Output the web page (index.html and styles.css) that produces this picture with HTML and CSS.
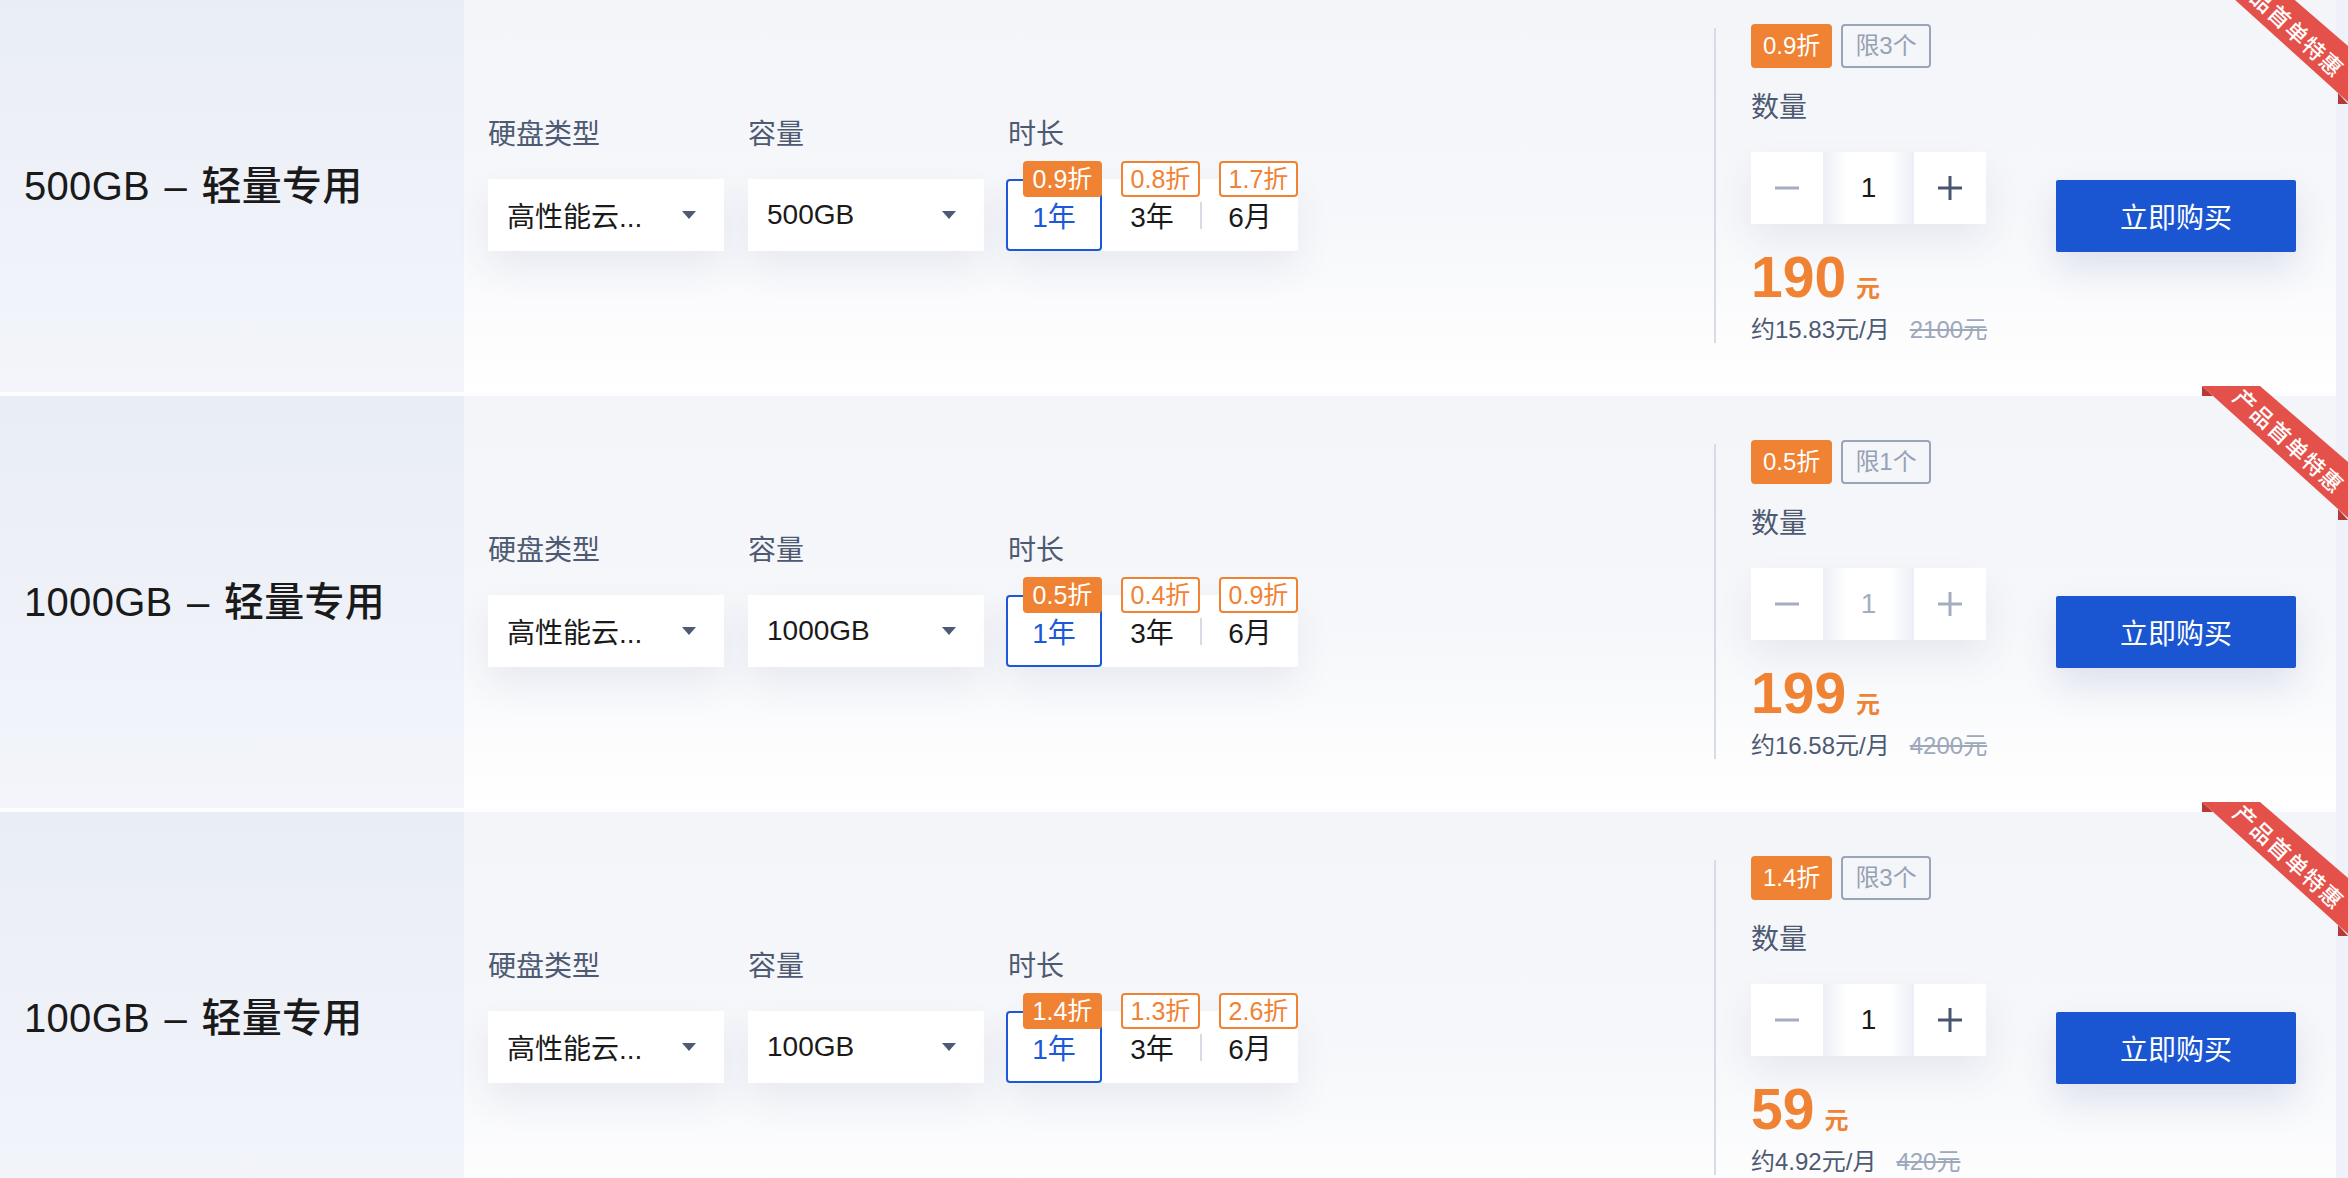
FILE: index.html
```html
<!DOCTYPE html>
<html lang="zh-CN">
<head>
<meta charset="utf-8">
<title>云硬盘特惠</title>
<link rel="stylesheet" href="styles.css">
</head>
<body>
<div class="page">
  <div class="list">

    <section class="row">
      <div class="name">500GB – 轻量专用</div>
      <div class="config">
        <div class="field">
          <div class="field-label">硬盘类型</div>
          <div class="select"><span>高性能云...</span><svg class="caret" viewBox="0 0 14 8"><path d="M0 0h14L7 8z"/></svg></div>
        </div>
        <div class="field">
          <div class="field-label">容量</div>
          <div class="select"><span>500GB</span><svg class="caret" viewBox="0 0 14 8"><path d="M0 0h14L7 8z"/></svg></div>
        </div>
        <div class="field">
          <div class="field-label">时长</div>
          <div class="seg">
            <div class="seg-item is-active"><span class="seg-tag is-filled">0.9折</span>1年</div>
            <div class="seg-sep is-hidden"></div>
            <div class="seg-item"><span class="seg-tag">0.8折</span>3年</div>
            <div class="seg-sep"></div>
            <div class="seg-item"><span class="seg-tag">1.7折</span>6月</div>
          </div>
        </div>
      </div>
      <div class="buy">
        <div class="vline"></div>
        <div class="order">
          <div class="badges"><span class="badge badge-off">0.9折</span><span class="badge badge-limit">限3个</span></div>
          <div class="field-label qty-label">数量</div>
          <div class="stepper">
            <div class="step"><svg viewBox="0 0 24 24" class="step-icon minus"><path d="M0 12h24"/></svg></div>
            <div class="step-num">1</div>
            <div class="step"><svg viewBox="0 0 24 24" class="step-icon plus"><path d="M0 12h24M12 0v24"/></svg></div>
          </div>
          <div class="price"><span class="price-num">190</span><span class="price-unit">元</span></div>
          <div class="price-sub"><span>约15.83元/月</span><span class="price-orig">2100元</span></div>
        </div>
        <button class="buy-btn" type="button">立即购买</button>
      </div>
      <svg class="ribbon" viewBox="0 0 152 152">
        <polygon class="ribbon-fold" points="6,0 6,10 17,10"/>
        <polygon class="ribbon-fold" points="142,123 142,134 152,134"/>
        <polygon class="ribbon-band" points="6,0 64,0 152,76 152,132"/>
        <text x="94" y="54" transform="rotate(43 94 54)" class="ribbon-text">产品首单特惠</text>
      </svg>
    </section>

    <section class="row">
      <div class="name">1000GB – 轻量专用</div>
      <div class="config">
        <div class="field">
          <div class="field-label">硬盘类型</div>
          <div class="select"><span>高性能云...</span><svg class="caret" viewBox="0 0 14 8"><path d="M0 0h14L7 8z"/></svg></div>
        </div>
        <div class="field">
          <div class="field-label">容量</div>
          <div class="select"><span>1000GB</span><svg class="caret" viewBox="0 0 14 8"><path d="M0 0h14L7 8z"/></svg></div>
        </div>
        <div class="field">
          <div class="field-label">时长</div>
          <div class="seg">
            <div class="seg-item is-active"><span class="seg-tag is-filled">0.5折</span>1年</div>
            <div class="seg-sep is-hidden"></div>
            <div class="seg-item"><span class="seg-tag">0.4折</span>3年</div>
            <div class="seg-sep"></div>
            <div class="seg-item"><span class="seg-tag">0.9折</span>6月</div>
          </div>
        </div>
      </div>
      <div class="buy">
        <div class="vline"></div>
        <div class="order">
          <div class="badges"><span class="badge badge-off">0.5折</span><span class="badge badge-limit">限1个</span></div>
          <div class="field-label qty-label">数量</div>
          <div class="stepper is-disabled">
            <div class="step"><svg viewBox="0 0 24 24" class="step-icon minus"><path d="M0 12h24"/></svg></div>
            <div class="step-num">1</div>
            <div class="step"><svg viewBox="0 0 24 24" class="step-icon plus"><path d="M0 12h24M12 0v24"/></svg></div>
          </div>
          <div class="price"><span class="price-num">199</span><span class="price-unit">元</span></div>
          <div class="price-sub"><span>约16.58元/月</span><span class="price-orig">4200元</span></div>
        </div>
        <button class="buy-btn" type="button">立即购买</button>
      </div>
      <svg class="ribbon" viewBox="0 0 152 152">
        <polygon class="ribbon-fold" points="6,0 6,10 17,10"/>
        <polygon class="ribbon-fold" points="142,123 142,134 152,134"/>
        <polygon class="ribbon-band" points="6,0 64,0 152,76 152,132"/>
        <text x="94" y="54" transform="rotate(43 94 54)" class="ribbon-text">产品首单特惠</text>
      </svg>
    </section>

    <section class="row">
      <div class="name">100GB – 轻量专用</div>
      <div class="config">
        <div class="field">
          <div class="field-label">硬盘类型</div>
          <div class="select"><span>高性能云...</span><svg class="caret" viewBox="0 0 14 8"><path d="M0 0h14L7 8z"/></svg></div>
        </div>
        <div class="field">
          <div class="field-label">容量</div>
          <div class="select"><span>100GB</span><svg class="caret" viewBox="0 0 14 8"><path d="M0 0h14L7 8z"/></svg></div>
        </div>
        <div class="field">
          <div class="field-label">时长</div>
          <div class="seg">
            <div class="seg-item is-active"><span class="seg-tag is-filled">1.4折</span>1年</div>
            <div class="seg-sep is-hidden"></div>
            <div class="seg-item"><span class="seg-tag">1.3折</span>3年</div>
            <div class="seg-sep"></div>
            <div class="seg-item"><span class="seg-tag">2.6折</span>6月</div>
          </div>
        </div>
      </div>
      <div class="buy">
        <div class="vline"></div>
        <div class="order">
          <div class="badges"><span class="badge badge-off">1.4折</span><span class="badge badge-limit">限3个</span></div>
          <div class="field-label qty-label">数量</div>
          <div class="stepper">
            <div class="step"><svg viewBox="0 0 24 24" class="step-icon minus"><path d="M0 12h24"/></svg></div>
            <div class="step-num">1</div>
            <div class="step"><svg viewBox="0 0 24 24" class="step-icon plus"><path d="M0 12h24M12 0v24"/></svg></div>
          </div>
          <div class="price"><span class="price-num">59</span><span class="price-unit">元</span></div>
          <div class="price-sub"><span>约4.92元/月</span><span class="price-orig">420元</span></div>
        </div>
        <button class="buy-btn" type="button">立即购买</button>
      </div>
      <svg class="ribbon" viewBox="0 0 152 152">
        <polygon class="ribbon-fold" points="6,0 6,10 17,10"/>
        <polygon class="ribbon-fold" points="142,123 142,134 152,134"/>
        <polygon class="ribbon-band" points="6,0 64,0 152,76 152,132"/>
        <text x="94" y="54" transform="rotate(43 94 54)" class="ribbon-text">产品首单特惠</text>
      </svg>
    </section>

  </div>
  <div class="rail"></div>
</div>
</body>
</html>
```

FILE: styles.css
```css
html, body {
  margin: 0;
  height: 100%;
  overflow: hidden;
}

body {
  background: #fcfdfe;
  font-family: "Liberation Sans", "Noto Sans CJK SC", sans-serif;
  color: #1a1a1a;
}

.page {
  display: flex;
  width: 2348px;
}

.list {
  width: 2336px;
  flex: none;
  display: flex;
  flex-direction: column;
  gap: 4px;
  margin-top: -20px;
}

.rail {
  width: 12px;
  flex: none;
  background: #eef1f7;
}

.row {
  position: relative;
  display: flex;
  height: 412px;
  background: linear-gradient(180deg, #f3f5f9 0%, #f6f7fa 55%, #ffffff 100%);
}

.name {
  width: 464px;
  flex: none;
  box-sizing: border-box;
  padding: 0 0 6px 24px;
  display: flex;
  align-items: center;
  font-size: 40px;
  font-weight: 500;
  word-spacing: 3px;
  letter-spacing: 0.3px;
  color: #1a1a1a;
  background: linear-gradient(180deg, #e9edf6 0%, #eef1f8 50%, #f3f5fb 100%);
  white-space: nowrap;
}

.config {
  flex: 1;
  display: flex;
  align-items: center;
  gap: 24px;
  padding-left: 24px;
  margin-bottom: 4px;
}

.field-label {
  font-size: 28px;
  line-height: 36px;
  color: #4e5a72;
  margin-bottom: 26px;
  white-space: nowrap;
}

.select {
  width: 236px;
  height: 72px;
  box-sizing: border-box;
  display: flex;
  align-items: center;
  justify-content: space-between;
  padding: 0 28px 0 19px;
  background: #fff;
  font-size: 28px;
  color: #1a1a1a;
  white-space: nowrap;
  box-shadow: 0 18px 36px rgba(40, 70, 130, 0.08);
}

.caret {
  width: 14px;
  height: 8px;
  flex: none;
  fill: #4e5a72;
}

.seg {
  display: flex;
  align-items: center;
  height: 72px;
  margin-left: -2px;
  background: #fff;
  border-radius: 4px;
  box-shadow: 0 18px 36px rgba(40, 70, 130, 0.08);
}

.seg-item {
  position: relative;
  width: 96px;
  height: 72px;
  box-sizing: border-box;
  display: flex;
  align-items: center;
  justify-content: center;
  font-size: 28px;
  color: #1a1a1a;
}

.seg-item.is-active {
  border: 2px solid #1c58d9;
  border-radius: 4px;
  color: #1c58d9;
}

.seg-tag {
  position: absolute;
  top: -18px;
  right: 0;
  width: 79px;
  height: 36px;
  box-sizing: border-box;
  border: 2px solid #f08233;
  border-radius: 4px;
  background: #fff;
  color: #f08233;
  font-size: 25px;
  line-height: 32px;
  text-align: center;
  white-space: nowrap;
}

.is-active .seg-tag {
  top: -20px;
  right: -2px;
}

.seg-tag.is-filled {
  background: #f08233;
  color: #fff;
}

.seg-sep {
  width: 2px;
  height: 27px;
  flex: none;
  background: #d6dbe4;
}

.seg-sep.is-hidden {
  background: transparent;
}

.buy {
  width: 622px;
  flex: none;
  display: flex;
  align-items: center;
}

.vline {
  width: 2px;
  height: 315px;
  flex: none;
  background: #d7dce6;
  margin-bottom: 2px;
}

.order {
  width: 235px;
  flex: none;
  margin-left: 35px;
  margin-bottom: 2px;
  display: flex;
  flex-direction: column;
  align-items: flex-start;
}

.badges {
  display: flex;
  gap: 9px;
  margin-bottom: 20px;
}

.badge {
  height: 44px;
  box-sizing: border-box;
  padding: 0 10px;
  border: 2px solid;
  border-radius: 4px;
  font-size: 24px;
  line-height: 40px;
  white-space: nowrap;
}

.badge-off {
  background: #f08233;
  border-color: #f08233;
  color: #fff;
}

.badge-limit {
  border-color: #9aa5b9;
  color: #97a1b5;
  padding: 0 12px;
}

.qty-label {
  line-height: 40px;
  margin-bottom: 24px;
}

.stepper {
  display: flex;
  height: 72px;
  margin-bottom: 21px;
  box-shadow: 0 18px 36px rgba(40, 70, 130, 0.08);
}

.step {
  width: 72px;
  background: #fff;
  display: flex;
  align-items: center;
  justify-content: center;
}

.step-num {
  width: 91px;
  display: flex;
  align-items: center;
  justify-content: center;
  font-size: 28px;
  color: #1a1a1a;
  background: linear-gradient(90deg, #eceff5 0, #ffffff 24px, #ffffff calc(100% - 24px), #eceff5 100%);
}

.step-icon {
  width: 24px;
  height: 24px;
  fill: none;
  stroke-width: 3;
}

.step-icon.minus {
  stroke: #a3adbf;
}

.step-icon.plus {
  stroke: #4a5570;
}

.stepper.is-disabled .step-num {
  color: #a3adbf;
}

.stepper.is-disabled .step-icon.plus {
  stroke: #a3adbf;
}

.price {
  height: 64px;
  line-height: 64px;
  margin-bottom: 5px;
  color: #f08233;
  font-weight: 700;
  white-space: nowrap;
}

.price-num {
  font-size: 57px;
}

.price-unit {
  font-size: 24px;
  margin-left: 10px;
}

.price-sub {
  font-size: 24px;
  line-height: 32px;
  color: #4e5a72;
  white-space: nowrap;
}

.price-orig {
  margin-left: 20px;
  color: #9ea8bb;
  text-decoration: line-through;
}

.buy-btn {
  width: 240px;
  height: 72px;
  flex: none;
  margin-left: 70px;
  margin-top: 60px;
  padding: 0;
  border: none;
  border-radius: 2px;
  background: #1b56d2;
  color: #fff;
  font-family: inherit;
  font-size: 28px;
  box-shadow: 0 18px 36px rgba(30, 60, 140, 0.12);
}

.ribbon {
  position: absolute;
  top: -10px;
  right: -12px;
  width: 152px;
  height: 152px;
  z-index: 3;
  overflow: visible;
}

.ribbon-band {
  fill: #e4514b;
}

.ribbon-fold {
  fill: #b43a35;
}

.ribbon-text {
  fill: #fff;
  font-family: "Noto Sans CJK SC", sans-serif;
  font-size: 22px;
  font-weight: 500;
  letter-spacing: 1.5px;
  text-anchor: middle;
  dominant-baseline: central;
}
```
